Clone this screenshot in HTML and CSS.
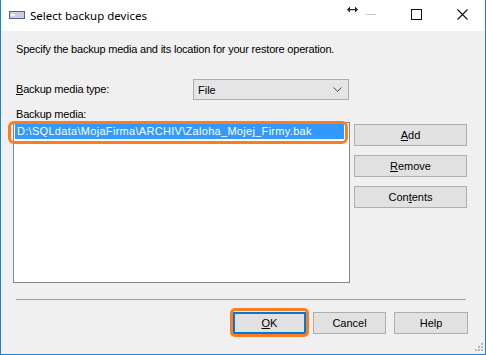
FILE: index.html
```html
<!DOCTYPE html>
<html lang="en">
<head>
  <meta charset="UTF-8" />
  <title>Select backup devices</title>
  <link rel="stylesheet" href="styles.css">
</head>
<body>
  <div class="window">
    <header class="titlebar">
      <svg class="app-icon" width="16" height="8" viewBox="0 0 16 8">
        <rect x="0.5" y="0.5" width="15" height="7" fill="#c9cbe0" stroke="#5a5f86"/>
        <rect x="2" y="3" width="4" height="2" fill="#f4f4ff"/>
      </svg>
      <span class="title">Select backup devices</span>
      <div class="controls">
        <svg class="ctl-resize" width="11" height="7" viewBox="0 0 11 7">
          <path d="M0 3.5 L3 0.5 L3 6.5 Z M11 3.5 L8 0.5 L8 6.5 Z" fill="#222"/>
          <rect x="2" y="3" width="7" height="1.2" fill="#222"/>
        </svg>
        <span class="ctl-min"></span>
        <span class="ctl-max"></span>
        <svg class="ctl-close" width="11" height="11" viewBox="0 0 11 11">
          <path d="M0.5 0.5 L10.5 10.5 M10.5 0.5 L0.5 10.5" stroke="#111" stroke-width="1.1"/>
        </svg>
      </div>
    </header>

    <main class="content">
      <p class="intro">Specify the backup media and its location for your restore operation.</p>

      <div class="type-row">
        <label class="label"><span class="key">B</span>ackup media type:</label>
        <div class="select">
          <span>File</span>
          <svg width="9" height="5" viewBox="0 0 9 5">
            <path d="M0.5 0.5 L4.5 4.3 L8.5 0.5" fill="none" stroke="#444" stroke-width="1"/>
          </svg>
        </div>
      </div>

      <div class="label media-label">Backup media:</div>

      <div class="media-row">
        <div class="listbox">
          <div class="item selected">D:\SQLdata\MojaFirma\ARCHIV\Zaloha_Mojej_Firmy.bak</div>
          <span class="ring ring-item"></span>
        </div>
        <div class="side-buttons">
          <div class="btn"><span class="key">A</span>dd</div>
          <div class="btn"><span class="key">R</span>emove</div>
          <div class="btn">Con<span class="key">t</span>ents</div>
        </div>
      </div>

      <hr class="separator">

      <div class="footer">
        <div class="btn btn-default"><span class="key">O</span>K<span class="ring ring-ok"></span></div>
        <div class="btn">Cancel</div>
        <div class="btn btn-help">Help</div>
      </div>

      <svg class="grip" width="8" height="8" viewBox="0 0 8 8">
        <rect x="6" y="0" width="2" height="2" fill="#bbb"/>
        <rect x="3" y="3" width="2" height="2" fill="#bbb"/>
        <rect x="6" y="3" width="2" height="2" fill="#bbb"/>
        <rect x="0" y="6" width="2" height="2" fill="#bbb"/>
        <rect x="3" y="6" width="2" height="2" fill="#bbb"/>
        <rect x="6" y="6" width="2" height="2" fill="#bbb"/>
      </svg>
    </main>
  </div>
</body>
</html>
```

FILE: styles.css
```css
:root {
  --accent: #1883d7;
  --face: #f0f0f0;
  --btn-bg: #e1e1e1;
  --btn-border: #adadad;
  --mark: #fb7d23;
}
* {
  box-sizing: border-box;
  margin: 0;
  padding: 0;
}
body {
  font-family: 'Liberation Sans', Arial, sans-serif;
  font-size: 11px;
  color: #000;
  background: #fff;
}
.window {
  width: 486px;
  height: 355px;
  display: flex;
  flex-direction: column;
  border: 1px solid var(--accent);
  border-top: none;
}
.titlebar {
  height: 31px;
  background: #fff;
  display: flex;
  align-items: center;
  padding-left: 8px;
}
.app-icon {
  margin-top: -2px;
}
.title {
  font-family: 'Noto Sans', 'Open Sans', sans-serif;
  font-size: 11.5px;
  margin-left: 5px;
  margin-top: -1px;
  color: #000;
}
.controls {
  margin-left: auto;
  display: flex;
  align-items: center;
  height: 100%;
  padding-bottom: 2px;
}
.ctl-resize {
  margin-right: 8px;
  margin-top: -10px;
}
.ctl-min {
  width: 10px;
  height: 1px;
  background: #c8c8c8;
  margin-right: 35px;
}
.ctl-max {
  width: 11px;
  height: 11px;
  border: 1px solid #111;
  margin-right: 35px;
}
.ctl-close {
  margin-right: 17px;
}
.content {
  flex: 1;
  background: var(--face);
  padding: 12px 17px 0 12px;
  position: relative;
}
.key {
  text-decoration: underline;
}
.intro {
  line-height: 13px;
  padding-left: 3px;
  letter-spacing: -0.2px;
}
.label {
  line-height: 13px;
  padding-left: 3px;
  letter-spacing: -0.2px;
}
.type-row {
  display: flex;
  align-items: center;
  margin-top: 23px;
}
.type-row .label {
  width: 180px;
}
.select {
  width: 156px;
  height: 21px;
  background: #e5e5e5;
  border: 1px solid #acacac;
  display: flex;
  align-items: center;
  justify-content: space-between;
  padding: 0 6px 0 4px;
}
.media-label {
  margin-top: 8px;
}
.media-row {
  display: flex;
  gap: 4px;
  margin-top: 1px;
}
.listbox {
  position: relative;
  width: 337px;
  height: 161px;
  background: #fff;
  border: 1px solid #828790;
  padding: 1px;
}
.item {
  height: 15px;
  line-height: 15px;
  padding-left: 2px;
  width: 329px;
  letter-spacing: 0.3px;
}
.item.selected {
  background: #3399ff;
  color: #fff;
}
.ring {
  position: absolute;
  border: 3px solid var(--mark);
  border-radius: 6px;
  pointer-events: none;
}
.ring-item {
  left: -6px;
  top: -2px;
  width: 340px;
  height: 23px;
}
.side-buttons {
  display: flex;
  flex-direction: column;
  gap: 9px;
  margin-top: 2px;
}
.btn {
  color: #000;
  background: var(--btn-bg);
  border: 1px solid var(--btn-border);
  height: 22px;
  width: 113px;
  position: relative;
  display: flex;
  align-items: center;
  justify-content: center;
}
.separator {
  border: none;
  border-top: 1px solid #a0a0a0;
  margin: 16px 2px 0 3px;
  width: 450px;
}
.footer {
  display: flex;
  justify-content: flex-end;
  gap: 7px;
  margin-top: 12px;
}
.footer .btn {
  width: 73px;
}
.footer .btn-help {
  width: 74px;
  margin-left: 1px;
}
.btn-default {
  border: 2px solid #0078d7;
}
.ring-ok {
  left: -5px;
  top: -6px;
  right: -5px;
  bottom: -5px;
  border-radius: 5px;
}
.grip {
  position: absolute;
  right: 2px;
  bottom: 3px;
}
```
